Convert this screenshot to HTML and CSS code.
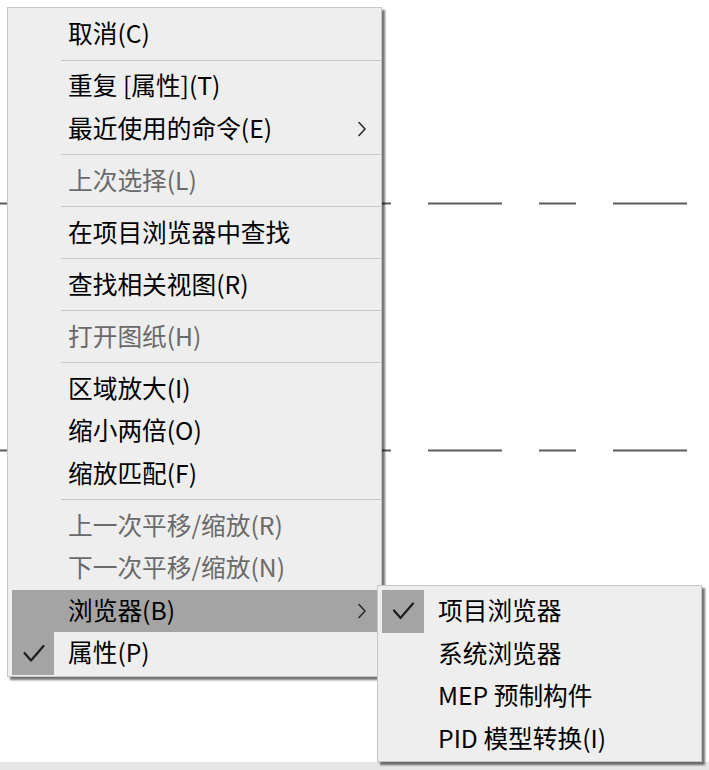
FILE: index.html
```html
<!DOCTYPE html>
<html lang="zh-CN">
<head>
<meta charset="utf-8">
<title>上下文菜单</title>
<link rel="stylesheet" href="styles.css">
</head>
<body>
<div class="app">
  <div class="canvas">
    <svg class="drawing" width="709" height="762" viewBox="0 0 709 762">
      <line class="axis" x1="0" y1="203.5" x2="709" y2="203.5"/>
      <line class="axis" x1="0" y1="450.5" x2="709" y2="450.5"/>
    </svg>
  </div>
  <div class="statusbar"></div>

  <div class="menu main-menu">
    <div class="item"><span class="gutter"></span><span class="label">取消(C)</span></div>
    <div class="sep"></div>
    <div class="item"><span class="gutter"></span><span class="label">重复 [属性](T)</span></div>
    <div class="item"><span class="gutter"></span><span class="label">最近使用的命令(E)</span>
      <svg class="chev" width="10" height="16" viewBox="0 0 10 16"><polyline points="2,1.5 8,8 2,14.5"/></svg></div>
    <div class="sep"></div>
    <div class="item disabled"><span class="gutter"></span><span class="label">上次选择(L)</span></div>
    <div class="sep"></div>
    <div class="item"><span class="gutter"></span><span class="label">在项目浏览器中查找</span></div>
    <div class="sep"></div>
    <div class="item"><span class="gutter"></span><span class="label">查找相关视图(R)</span></div>
    <div class="sep"></div>
    <div class="item disabled"><span class="gutter"></span><span class="label">打开图纸(H)</span></div>
    <div class="sep"></div>
    <div class="item"><span class="gutter"></span><span class="label">区域放大(I)</span></div>
    <div class="item"><span class="gutter"></span><span class="label">缩小两倍(O)</span></div>
    <div class="item"><span class="gutter"></span><span class="label">缩放匹配(F)</span></div>
    <div class="sep"></div>
    <div class="item disabled"><span class="gutter"></span><span class="label">上一次平移/缩放(R)</span></div>
    <div class="item disabled"><span class="gutter"></span><span class="label">下一次平移/缩放(N)</span></div>
    <div class="item hover"><span class="gutter"></span><span class="label">浏览器(B)</span>
      <svg class="chev" width="10" height="16" viewBox="0 0 10 16"><polyline points="2,1.5 8,8 2,14.5"/></svg></div>
    <div class="item"><span class="gutter checked">
      <svg class="check" width="42" height="42" viewBox="0 0 42 42"><polyline points="12.5,21 19,28.5 31.5,14"/></svg></span><span class="label">属性(P)</span></div>
  </div>

  <div class="menu sub-menu">
    <div class="item"><span class="gutter checked">
      <svg class="check" width="42" height="42" viewBox="0 0 42 42"><polyline points="12,20.5 18.5,28 31,13.5"/></svg></span><span class="label">项目浏览器</span></div>
    <div class="item"><span class="gutter"></span><span class="label">系统浏览器</span></div>
    <div class="item"><span class="gutter"></span><span class="label">MEP 预制构件</span></div>
    <div class="item"><span class="gutter"></span><span class="label">PID 模型转换(I)</span></div>
  </div>
</div>
</body>
</html>
```
FILE: styles.css
```css
html, body {
  margin: 0;
  padding: 0;
  background: #ffffff;
}

body {
  width: 709px;
  height: 770px;
  overflow: hidden;
  font-family: "Noto Sans CJK SC", "Microsoft YaHei", sans-serif;
}

.app {
  position: relative;
  width: 709px;
  height: 770px;
  display: flex;
  flex-direction: column;
}

.canvas {
  flex: 1;
  background: #ffffff;
}

.drawing {
  display: block;
}

.axis {
  stroke: #5c5c5c;
  stroke-width: 2;
  stroke-dasharray: 37 37 74 37;
  stroke-dashoffset: 16;
}

.statusbar {
  height: 8px;
  background: #e6e6e6;
}

.menu {
  position: absolute;
  box-sizing: border-box;
  background: #eeeeee;
  border: 1px solid #c6c6c6;
  box-shadow: 3px 3px 2px rgba(0, 0, 0, 0.55);
  padding: 5px 0 1px;
}

.main-menu {
  left: 7px;
  top: 7px;
  width: 375px;
}

.sub-menu {
  left: 377px;
  top: 585px;
  width: 325px;
  padding-top: 4px;
}

.item {
  display: flex;
  align-items: center;
  height: 42.5px;
  margin: 0 4px;
  color: #000000;
  font-size: 24.7px;
  font-weight: 400;
  line-height: 1;
  white-space: nowrap;
}

.item.disabled {
  color: #6a6a6a;
}

.item.hover {
  background: #a4a4a4;
}

.gutter {
  flex: none;
  width: 42px;
  height: 42.5px;
  margin-right: 14px;
  display: flex;
  align-items: center;
  justify-content: center;
}

.gutter.checked {
  background: #a4a4a4;
}

.check polyline {
  fill: none;
  stroke: #1e1e1e;
  stroke-width: 2.2;
  stroke-linecap: round;
  stroke-linejoin: round;
}

.label {
  flex: none;
  padding-bottom: 3px;
}

.chev {
  margin-left: auto;
  margin-right: 10px;
  flex: none;
}

.chev polyline {
  fill: none;
  stroke: #2a2a2a;
  stroke-width: 1.6;
  stroke-linecap: round;
  stroke-linejoin: round;
}

.sep {
  height: 1px;
  margin: 4px 0 4.5px 53px;
  background: #c8c8c8;
}
```
